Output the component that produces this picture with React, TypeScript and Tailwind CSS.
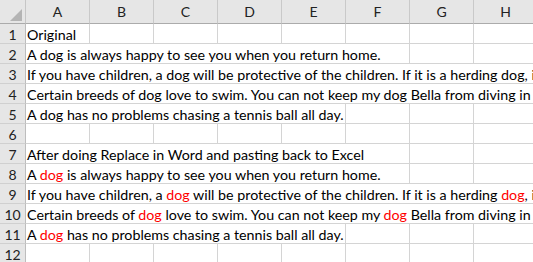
import React from 'react';

type Part = { t: string; red?: boolean };
type Row = { n: number; span: number; parts: Part[] };

const cols = ['A', 'B', 'C', 'D', 'E', 'F', 'G', 'H'];

// col-span classes written in full so tailwind picks them up
const spanClass: Record<number, string> = {
  1: 'col-span-1',
  5: 'col-span-5',
  6: 'col-span-6',
  8: 'col-span-8',
};

const rows: Row[] = [
  { n: 1, span: 1, parts: [{ t: 'Original' }] },
  { n: 2, span: 6, parts: [{ t: 'A dog is always happy to see you when you return home.' }] },
  { n: 3, span: 8, parts: [{ t: 'If you have children, a dog will be protective of the children. If it is a herding dog, it will try to herd them.' }] },
  { n: 4, span: 8, parts: [{ t: 'Certain breeds of dog love to swim. You can not keep my dog Bella from diving in the pool.' }] },
  { n: 5, span: 5, parts: [{ t: 'A dog has no problems chasing a tennis ball all day.' }] },
  { n: 6, span: 0, parts: [] },
  { n: 7, span: 6, parts: [{ t: 'After doing Replace in Word and pasting back to Excel' }] },
  { n: 8, span: 6, parts: [{ t: 'A ' }, { t: 'dog', red: true }, { t: ' is always happy to see you when you return home.' }] },
  {
    n: 9,
    span: 8,
    parts: [
      { t: 'If you have children, a ' },
      { t: 'dog', red: true },
      { t: ' will be protective of the children. If it is a herding ' },
      { t: 'dog', red: true },
      { t: ', it will try to herd them.' },
    ],
  },
  {
    n: 10,
    span: 8,
    parts: [
      { t: 'Certain breeds of ' },
      { t: 'dog', red: true },
      { t: ' love to swim. You can not keep my ' },
      { t: 'dog', red: true },
      { t: ' Bella from diving in the pool.' },
    ],
  },
  { n: 11, span: 5, parts: [{ t: 'A ' }, { t: 'dog', red: true }, { t: ' has no problems chasing a tennis ball all day.' }] },
  { n: 12, span: 0, parts: [] },
];

const SheetRow: React.FC<{ row: Row }> = ({ row }) => {
  const empties = 8 - (row.span || 0);
  return (
    <div className="flex h-[20px] shrink-0">
      <div className="w-[26px] shrink-0 bg-[#e6e6e6] border-r border-b border-r-[#bdbdbd] border-b-[#d0d0d0] text-center text-[#222] text-[14px] leading-[19px] pt-px">
        {row.n}
      </div>
      <div className="grid grid-cols-[repeat(8,64px)] shrink-0">
        {row.span > 0 && (
          <div
            className={`${spanClass[row.span]} border-r border-b border-[#d4d4d4] whitespace-nowrap overflow-hidden pl-[1px] leading-[19px] pt-px text-black`}
          >
            {row.parts.map((p, i) => (
              <span key={i} className={p.red ? 'text-[#ff0000]' : ''}>
                {p.t}
              </span>
            ))}
          </div>
        )}
        {Array.from({ length: empties }).map((_, i) => (
          <div key={i} className="border-r border-b border-[#d4d4d4]" />
        ))}
      </div>
    </div>
  );
};

export default function App() {
  return (
    <div className="w-[533px] h-[262px] overflow-hidden bg-white font-['Lato','Liberation_Sans',sans-serif] text-[14.25px]">
      <div className="flex h-[24px]">
        <div className="w-[26px] shrink-0 bg-[#e6e6e6] border-r border-b border-r-[#c6c6c6] border-b-[#ababab] flex items-end justify-end pr-[3px] pb-[2px]">
          <svg width="12" height="12" viewBox="0 0 12 12">
            <polygon points="12,0 12,12 0,12" fill="#b4b4b4" />
          </svg>
        </div>
        {cols.map((c) => (
          <div
            key={c}
            className="w-[64px] shrink-0 bg-[#e6e6e6] border-r border-b border-r-[#c9c9c9] border-b-[#ababab] flex items-center justify-center text-[#222] text-[14px]"
          >
            {c}
          </div>
        ))}
      </div>
      {rows.map((r) => (
        <SheetRow key={r.n} row={r} />
      ))}
    </div>
  );
}
